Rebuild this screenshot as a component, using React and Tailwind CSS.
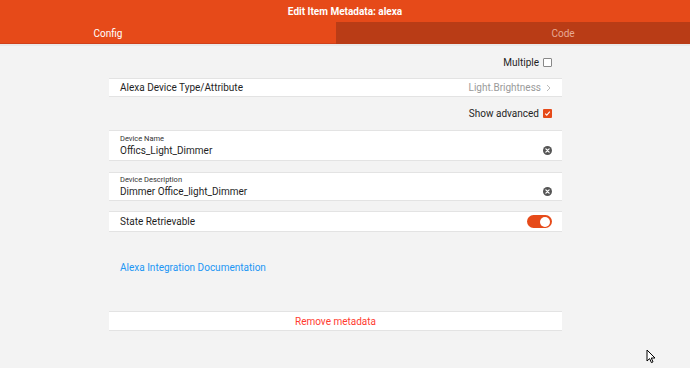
import React from 'react';

// ─── small pieces ────────────────────────────────────────────────────────────
function ClearIcon() {
  return (
    <svg width="9" height="9" viewBox="0 0 10 10">
      <circle cx="5" cy="5" r="5" fill="#555" />
      <path d="M3.2 3.2 L6.8 6.8 M6.8 3.2 L3.2 6.8" stroke="#fff" strokeWidth="1.4" strokeLinecap="round" />
    </svg>
  );
}

function Card({ children, className = '' }) {
  return (
    <div className={`bg-white border-y border-[#e3e3e3] ${className}`}>{children}</div>
  );
}

export default function App() {
  return (
    <div
      className="w-[690px] h-[368px] bg-[#f3f3f3] relative overflow-hidden text-[#1f1f1f]"
      style={{ fontFamily: 'Roboto, "Liberation Sans", sans-serif' }}
    >
      {/* ── HEADER ─────────────────────────────────────────────────────────── */}
      <div className="bg-[#e64a19]">
        <div className="h-[22px] flex items-center justify-center text-white text-[10px] font-bold">
          Edit Item Metadata: alexa
        </div>
        <div className="flex h-[22px] text-[10px]">
          <div className="w-[336px] shrink-0 flex items-center pt-[1px] border-b border-[#d0401a]">
            <div className="w-[216px] text-center text-white">Config</div>
          </div>
          <div className="w-[354px] shrink-0 flex items-center pt-[1px] bg-[#b93c16]">
            <div className="w-[454px] shrink-0 text-center text-[#e8a994]">Code</div>
          </div>
        </div>
      </div>
      <div className="h-[2px] bg-[#e9e9e9]" />

      {/* ── FORM ───────────────────────────────────────────────────────────── */}
      <div className="ml-[109px] w-[453px] text-[10px]">
        <div className="h-[32px] flex items-center justify-end gap-[4px] pr-[10px] pt-[1px]">
          <span>Multiple</span>
          <span className="w-[9px] h-[9px] border border-[#888] rounded-[1px] bg-white" />
        </div>

        <Card className="h-[19px] flex items-center justify-between pl-[11px] pr-[11px]">
          <span>Alexa Device Type/Attribute</span>
          <span className="flex items-center gap-[5px] text-[#9a9a9a]">
            Light.Brightness
            <svg width="5" height="8" viewBox="0 0 5 8">
              <path d="M1 1 L4 4 L1 7" fill="none" stroke="#bbb" strokeWidth="1" />
            </svg>
          </span>
        </Card>

        <div className="h-[33px] flex items-center justify-end gap-[4px] pr-[10px]">
          <span>Show advanced</span>
          <span className="w-[9px] h-[9px] bg-[#e64a19] rounded-[1px] flex items-center justify-center">
            <svg width="7" height="7" viewBox="0 0 7 7">
              <path d="M1.2 3.6 L2.8 5.2 L5.8 1.6" fill="none" stroke="#fff" strokeWidth="1.1" />
            </svg>
          </span>
        </div>

        <Card className="h-[31px] flex items-center justify-between pl-[11px] pr-[10px]">
          <div className="flex flex-col leading-none">
            <span className="text-[7.5px] text-[#333] mb-[4px]">Device Name</span>
            <span>Offics_Light_Dimmer</span>
          </div>
          <span className="mt-[9px]"><ClearIcon /></span>
        </Card>

        <div className="h-[11px]" />

        <Card className="h-[29px] flex items-center justify-between pl-[11px] pr-[10px]">
          <div className="flex flex-col leading-none">
            <span className="text-[7.5px] text-[#333] mb-[4px]">Device Description</span>
            <span>Dimmer Office_light_Dimmer</span>
          </div>
          <span className="mt-[9px]"><ClearIcon /></span>
        </Card>

        <div className="h-[10px]" />

        <Card className="h-[21px] flex items-center justify-between pl-[11px] pr-[10px]">
          <span>State Retrievable</span>
          <span className="w-[25px] h-[13px] rounded-full bg-[#e64a19] flex items-center justify-end pr-[2px]">
            <span className="w-[10px] h-[10px] rounded-full bg-white" />
          </span>
        </Card>

        <div className="h-[44px] flex items-end pl-[11px] pb-[1px] text-[#2196f3]">
          Alexa Integration Documentation
        </div>

        <div className="h-[35px]" />

        <Card className="h-[20px] flex items-center justify-center text-[#ff3b30]">
          Remove metadata
        </Card>
      </div>

      {/* mouse pointer overlay */}
      <svg className="absolute left-[646px] top-[349px]" width="11" height="15" viewBox="0 0 11 15">
        <path d="M1 1 L1 12 L3.6 9.6 L5.4 13.6 L7 12.9 L5.3 9 L9 9 Z" fill="#fff" stroke="#000" strokeWidth="1" strokeLinejoin="round" />
      </svg>
    </div>
  );
}
